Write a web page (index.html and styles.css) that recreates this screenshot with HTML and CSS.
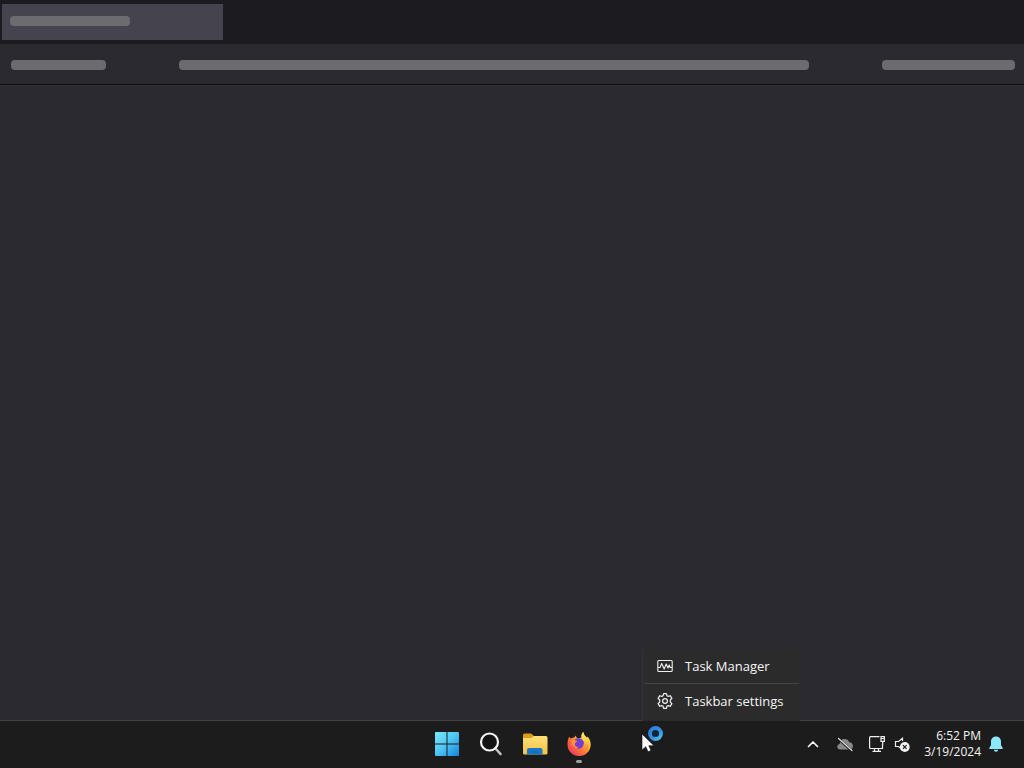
FILE: index.html
```html
<!DOCTYPE html>
<html lang="en">
<head>
<meta charset="utf-8">
<title>Desktop</title>
<link rel="stylesheet" href="styles.css">
</head>
<body>
<div class="desktop">
  <header class="tabstrip">
    <div class="tab"><span class="placeholder tab-title"></span></div>
  </header>
  <div class="toolbar">
    <span class="placeholder nav"></span>
    <span class="placeholder address"></span>
    <span class="placeholder actions"></span>
  </div>
  <main class="content"></main>

  <footer class="taskbar">
    <nav class="apps" aria-label="Apps">
      <button class="app" aria-label="Start">
        <svg width="24" height="24" viewBox="0 0 24 24">
          <defs><linearGradient id="win" gradientUnits="userSpaceOnUse" x1="0" y1="0" x2="24" y2="24"><stop offset="0" stop-color="#7ee9fb"/><stop offset=".5" stop-color="#4cc4f4"/><stop offset="1" stop-color="#1583dc"/></linearGradient></defs>
          <path fill="url(#win)" d="M1 0h10.500v11.500H0V1a1 1 0 0 1 1-1zM12.500 0H23a1 1 0 0 1 1 1v10.500H12.500zM0 12.500h11.500V24H1a1 1 0 0 1-1-1zM12.500 12.500H24V23a1 1 0 0 1-1 1H12.500z"/>
        </svg>
      </button>
      <button class="app" aria-label="Search">
        <svg width="24" height="24" viewBox="0 0 24 24" fill="none">
          <path d="M16.500 16.500l5 5.500" stroke="#c4c4c4" stroke-width="2.600" stroke-linecap="round"/>
          <circle cx="10.500" cy="10" r="8.500" fill="#141414" stroke="#f4f4f4" stroke-width="2.200"/>
        </svg>
      </button>
      <button class="app" aria-label="File Explorer">
        <svg width="26" height="24" viewBox="0 0 26 24">
          <defs><linearGradient id="fold" x1="0" y1="0" x2="0" y2="1"><stop offset="0" stop-color="#ffe07a"/><stop offset="1" stop-color="#f6c142"/></linearGradient></defs>
          <path fill="#d99e16" d="M1 3a1.500 1.500 0 0 1 1.500-1.500H9L12 4v6H1z"/>
          <path fill="url(#fold)" d="M1 6h8l3-2h12a1.500 1.500 0 0 1 1.500 1.500V21a1.500 1.500 0 0 1-1.500 1.500H2.500A1.500 1.500 0 0 1 1 21z"/>
          <path fill="#1878c8" d="M5 22.500V18a2 2 0 0 1 2-2h11.500a2 2 0 0 1 2 2v4.500z"/>
          <path fill="#0f65b4" d="M9 19.500h7.500v1H9z"/>
        </svg>
      </button>
      <button class="app running" aria-label="Firefox">
        <svg width="24" height="24" viewBox="0 0 24 24">
          <defs>
            <linearGradient id="fox" x1=".9" y1=".1" x2=".15" y2=".85"><stop offset="0" stop-color="#fff04e"/><stop offset=".35" stop-color="#ffb13b"/><stop offset=".6" stop-color="#ff7a35"/><stop offset="1" stop-color="#f0405a"/></linearGradient>
            <linearGradient id="tail" x1="0" y1="0" x2="0" y2="1"><stop offset="0" stop-color="#fff36b"/><stop offset=".5" stop-color="#ffc83c"/><stop offset="1" stop-color="#ff6839"/></linearGradient>
          </defs>
          <path fill="url(#fox)" d="M2.500 4.500c.2 1 .7 1.500 1.300 2 1-.6 2.200-1 3.200-1L9 3.500c0 1.400.6 2.300 1.800 3.200l3.700-1.200C14 3.200 14.800 1.200 16.300 0c.2 3 2 4 3.600 5.800l.6-1.300c2 2.200 3.300 5 3.200 8.200C23.500 19.200 18.600 24 12.300 24 5.800 24 .7 19.300.5 13 .4 9.700 1 6.800 2.500 4.500z"/>
          <circle cx="11.500" cy="11.500" r="5.200" fill="#7a3ccf"/>
          <path fill="#5a49d8" d="M10 7c3.500-1.300 7 1.200 7 5-1.400-2.500-3.500-3-7-2.500z"/>
          <path fill="#ff913b" d="M4.200 8.500C5.500 7 7 7.200 8 8.500c1 0 1.600 0 2.100.6-.5 1.200-1.500 1.300-2.100 2.200-.5 2 .4 3.200 1.800 3.500.8.200 1.100.3 1.100.8-1.300 1.200-1.600 1.200-2.900 0-2.400-1.400-3.800-4-3.800-7.100z"/>
          <path fill="url(#tail)" d="M16.300 0c.2 3 2.200 4 4 6.500 2.700 4.200 1.600 10-2.600 12.500 1.800-4.500 1-8.500-2.200-11.200C14 6 14.200 2 16.300 0z"/>
        </svg>
      </button>
    </nav>

    <div class="tray">
      <button class="tray-button" aria-label="Show hidden icons">
        <svg width="16" height="16" viewBox="0 0 16 16" fill="none" stroke="#f5f5f5" stroke-width="1.700" stroke-linecap="round" stroke-linejoin="round"><path d="M3.500 10.500L8 6l4.500 4.500"/></svg>
      </button>
      <button class="tray-button" aria-label="OneDrive">
        <svg width="16" height="16" viewBox="0 0 16 16" fill="none">
          <path fill="#8a8a8a" d="M3.500 13.500C1.500 13.500.3 12.300.3 10.700c0-1.500 1-2.600 2.500-2.800C2.800 4.800 5 3 7.500 3c2.200 0 3.900 1.200 4.600 3.200 2.300 0 3.800 1.700 3.800 3.900 0 2-1.300 3.400-3.200 3.400z"/>
          <path stroke="#1c1c1c" stroke-width="2.400" d="M1.500 3L14.500 14.500"/><path stroke="#e6e6e6" stroke-width="1.200" stroke-linecap="round" d="M1.500 2.500L15 14.500"/>
        </svg>
      </button>
      <button class="tray-button status" aria-label="Network and sound">
        <svg width="16" height="16" viewBox="0 0 16 16" fill="none" stroke="#f0f0f0" stroke-width="1.200">
          <path d="M10.500.6H1.600a1 1 0 0 0-1 1v9.900a1 1 0 0 0 1 1h11.900V8.500M5.500 12.500v3M9.500 12.500v3M3.500 15.400h8.500M12 .6h3.400v4.800H12zM12 2.500h3.400M13.700 5.400v3.500"/>
        </svg>
        <svg width="16" height="16" viewBox="0 0 16 16" fill="none" stroke="#f0f0f0" stroke-width="1.200">
          <path d="M8.500 5V2.300L4.500 5.500H1.500v5h3L7 12.500"/>
          <circle cx="10.800" cy="11" r="4.900" fill="#f2f2f2" stroke="none"/>
          <path stroke="#1c1c1c" d="M9 9.200l3.600 3.600M12.600 9.200L9 12.800"/>
        </svg>
      </button>
      <button class="clock"><time datetime="2024-03-19T18:52">6:52 PM<br>3/19/2024</time></button>
      <button class="tray-button" aria-label="Notifications">
        <svg width="16" height="16" viewBox="0 0 16 16"><path fill="#8ce8fb" d="M8 .5c3 0 5 2.200 5 5v3.700l1.700 2.600c.3.600 0 1.200-.7 1.200H2c-.7 0-1-.6-.7-1.200L3 9.200V5.500c0-2.800 2-5 5-5zM5.800 13.700h4.400C10 15 9.200 15.700 8 15.700S6 15 5.800 13.700z"/></svg>
      </button>
    </div>

    <div class="menu" role="menu">
      <button class="menu-item" role="menuitem">
        <svg width="16" height="16" viewBox="0 0 16 16" fill="none" stroke="#f0f0f0" stroke-width="1.100" stroke-linejoin="round"><rect x=".8" y="2.500" width="14.400" height="11" rx="1"/><path d="M1 9.500h2L4.700 5.500l2.500 5.500 2-5 1.800 4L12.200 7l1 2.500h2"/></svg>
        Task Manager
      </button>
      <button class="menu-item" role="menuitem">
        <svg width="16" height="16" viewBox="0 0 16 16" fill="none" stroke="#f0f0f0" stroke-width="1.200" stroke-linejoin="round"><path d="M6.600.6h2.800l.5 2.100 1.300.7 2-.7 1.700 2.600L13.300 7v2l1.600 1.700-1.700 2.600-2-.7-1.300.7-.5 2.100H6.600l-.5-2.100-1.300-.7-2 .7-1.700-2.600L2.700 9V7L1.100 5.300l1.700-2.600 2 .7 1.300-.7z"/><circle cx="8" cy="8" r="2.400"/></svg>
        Taskbar settings
      </button>
    </div>

    <svg class="pointer" width="24" height="28" viewBox="0 0 24 28">
      <defs><linearGradient id="busy" x1="0" y1="0" x2="1" y2="1"><stop offset="0" stop-color="#2f7fd8"/><stop offset=".6" stop-color="#3690e6"/><stop offset="1" stop-color="#45c8e4"/></linearGradient></defs>
      <circle cx="14.500" cy="8.500" r="5.500" fill="#10243a" stroke="url(#busy)" stroke-width="3.800"/>
      <path fill="#fff" stroke="#111" stroke-width=".6" d="M1 9v16l3.800-3.300L7 26.700l3-1.300-2.200-4.700H13z"/>
    </svg>
  </footer>
</div>
</body>
</html>
```
FILE: styles.css
```css
* {
  box-sizing: border-box;
}

body {
  margin: 0;
  background: #2b2a30;
  color: #f5f5f5;
  font-family: "Open Sans", "Noto Sans", sans-serif;
  font-size: 13px;
}

button {
  margin: 0;
  padding: 0;
  border: 0;
  background: none;
  color: inherit;
  font: inherit;
}

svg {
  display: block;
  flex: none;
}

.desktop {
  display: flex;
  flex-direction: column;
  min-height: 100vh;
}

.tabstrip {
  padding: 4px 2px;
  background: #1c1b20;
}

.tab {
  width: 221px;
  height: 36px;
  padding: 12px 8px;
  background: #45434e;
}

.placeholder {
  display: block;
  height: 10px;
  border-radius: 4px;
  background: #6c6b70;
}

.tab-title {
  width: 120px;
}

.toolbar {
  display: flex;
  align-items: center;
  gap: 73px;
  height: 41px;
  padding: 2px 9px 0 11px;
  border-bottom: 1px solid #0d0c10;
}

.nav {
  width: 95px;
}

.address {
  flex: 1;
}

.actions {
  width: 133px;
}

.content {
  flex: 1;
  border-top: 1px solid #323136;
}

.taskbar {
  position: relative;
  display: grid;
  grid-template-columns: 1fr auto 1fr;
  align-items: center;
  height: 48px;
  padding: 0 0 2px 1px;
  border-top: 1px solid #414144;
  background: #1c1c1c;
}

.apps {
  grid-column: 2;
  display: flex;
}

.app {
  position: relative;
  display: grid;
  place-items: center;
  width: 44px;
  height: 44px;
}

.running::after {
  content: "";
  position: absolute;
  bottom: 3px;
  left: 19px;
  width: 6px;
  height: 3px;
  border-radius: 2px;
  background: #a0a0a0;
}

.tray {
  justify-self: end;
  display: flex;
  align-items: center;
  gap: 16px;
  padding-right: 20px;
}

.status {
  display: flex;
  gap: 9px;
}

.clock {
  margin: 0 -9px 0 -5px;
  min-width: 60px;
  font-size: 12px;
  line-height: 16px;
  text-align: right;
}

.menu {
  position: absolute;
  bottom: 47px;
  left: 642px;
  width: 158px;
  padding: 1px 1px 3px;
  border-left: 1px solid #353535;
  border-radius: 6px 6px 0 0;
  background: #2b2b2b;
}

.menu-item {
  display: flex;
  align-items: center;
  gap: 12px;
  width: 100%;
  height: 35px;
  padding: 0 13px;
  white-space: nowrap;
}

.menu-item + .menu-item {
  border-top: 1px solid #444;
}

.pointer {
  position: absolute;
  top: 4px;
  left: 641px;
}
```
